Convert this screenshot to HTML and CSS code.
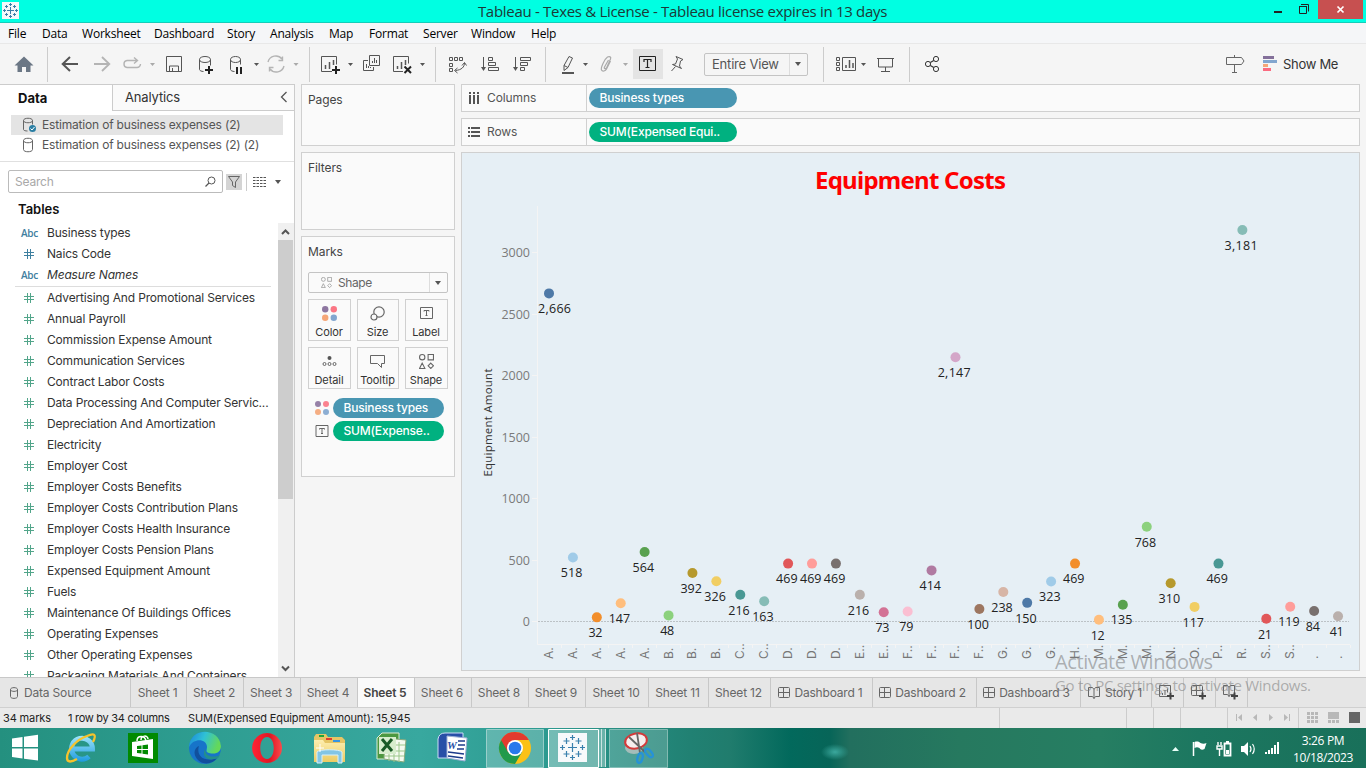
FILE: index.html
```html
<!DOCTYPE html>
<html lang="en">
<head>
<meta charset="utf-8">
<title>Tableau - Texes &amp; License</title>
<link rel="stylesheet" href="styles.css">
</head>
<body>
<svg class="defs" width="0" height="0">
  <symbol id="hash" viewBox="0 0 10 10"><path d="M3.5 0v10M6.5 0v10M0 3.5h10M0 6.5h10" fill="none" stroke="currentColor" stroke-width="1"/></symbol>
  <symbol id="dash" viewBox="0 0 12 12"><path d="M1.5.5h9a1 1 0 0 1 1 1v8a1 1 0 0 1-1 1h-9a1 1 0 0 1-1-1v-8a1 1 0 0 1 1-1zM5.5.5v10M.5 5.5h11" fill="none" stroke="#666"/></symbol>
  <symbol id="book" viewBox="0 0 12 12"><path d="M6 2.500L4.500.5h-4v9h4L6 11.500l1.500-2h4v-9h-4zM6 2.500v9" fill="none" stroke="#666"/></symbol>
  <symbol id="dots" viewBox="0 0 14 14"><circle cx="3" cy="3" r="3" fill="#8d76a0"/><circle cx="11" cy="3" r="3" fill="#fb7684"/><circle cx="3" cy="11" r="3" fill="#f5a677"/><circle cx="11" cy="11" r="3" fill="#82a6cf"/></symbol>
  <symbol id="tbox" viewBox="0 0 13 12"><path d="M.5.5h12v11H.5zM4 4.500V3.500h5v1M6.500 3.500v5M5.500 8.500h2" fill="none" stroke="#666"/></symbol>
  <symbol id="shapes" viewBox="0 0 14 14"><g fill="none" stroke="currentColor"><circle cx="3" cy="3" r="2.500"/><path d="M8.500.5h5v5h-5zM3 8.500L.5 13.500h5z"/><path d="M11 8.500l2.500 2.500-2.500 2.500L8.500 11z"/></g></symbol>
</svg>

<header class="titlebar">
  <svg class="app-icon" width="17" height="17"><rect width="17" height="17" fill="#f4f8fa"/><g stroke="#3b7ea8" stroke-width="1"><path d="M8.500 5v7M5 8.500h7M8.500 1v3M7 2.500h3M8.500 13v3M7 14.500h3M1 8.500h3M2.500 7v3M13 8.500h3M14.500 7v3M4.500 3v3M3 4.500h3M12.500 3v3M11 4.500h3M4.500 11v3M3 12.500h3M12.500 11v3M11 12.500h3"/></g></svg>
  <span class="title-text">Tableau - Texes &amp; License - Tableau license expires in 13 days</span>
  <div class="win-controls">
    <svg width="48" height="19"><path d="M4 12h8" stroke="#222" stroke-width="2"/><path d="M29.500 6.500h7v7h-7z" fill="none" stroke="#222"/><path d="M29 6.500h8M31 4.500h7.500v7" fill="none" stroke="#222"/></svg>
    <svg class="close" width="45" height="19"><path d="M19.500 6.500l6 6M25.500 6.500l-6 6" stroke="#fff" stroke-width="1.700"/></svg>
  </div>
</header>

<nav class="menu"><span>File</span><span>Data</span><span>Worksheet</span><span>Dashboard</span><span>Story</span><span>Analysis</span><span>Map</span><span>Format</span><span>Server</span><span>Window</span><span>Help</span></nav>

<div class="toolbar">
  <svg width="48" height="40" viewBox="0 44 48 40"><path d="M24 56.500l-9.500 9h3v6.500h4.500v-5h4v5h4.500v-6.500h3z" fill="#6b7785"/><path d="M47.500 47v35" stroke="#ccc"/></svg>
  <svg width="262" height="40" viewBox="48 44 262 40" fill="none" stroke="#555">
    <path d="M78 64H63M70 57l-7.300 7 7.300 7" stroke-width="2"/>
    <g stroke="#b4b4b4"><path d="M94 64h15M102 57l7.300 7-7.300 7" stroke-width="1.800"/><path d="M137 60.500h-10a3.500 3.500 0 0 0-3 3.500 3.500 3.500 0 0 0 3 3.500h10a3.500 3.500 0 0 0 3.500-3.500M134 57.500l3.500 3-3.500 3" stroke-width="1.400"/><path d="M268 62a8 8 0 0 1 14-3M284 66a8 8 0 0 1-14 3M282.500 56.500v4h-4M269.500 71.500v-4h4" stroke-width="1.400"/></g>
    <path d="M166.500 56.500h15v15h-15zM169.500 71v-5h9v5M172.500 71v-3"/>
    <path d="M199.500 59.500v10c0 1 2 2 4 2M210.500 59.500v6M199.500 59.500c0-4 11-4 11 0s-11 4-11 0z"/><path d="M205 70h8M209 66v8" stroke="#222" stroke-width="2"/>
    <path d="M230.500 59.500v10c0 1 2 2 4 2M240.500 59.500v5M230.500 59.500c0-4 10-4 10 0s-10 4-10 0z"/><path d="M237 67v7M241 67v7" stroke="#222" stroke-width="2"/>
    <g stroke="none"><path d="M150 63h5l-2.500 3zM293.500 63h5l-2.500 3z" fill="#aaa"/><path d="M254 63h5l-2.500 3z" fill="#555"/></g>
    <path d="M309.500 47v35" stroke="#ccc"/>
  </svg>
  <svg width="126" height="40" viewBox="310 44 126 40" fill="none" stroke="#555">
    <path d="M332 71.500h-10.500v-15h15v8"/><path d="M325.500 65v4M329.500 62v7M333.500 60v5" stroke-width="1.500"/><path d="M332 70h8M336 66v8" stroke="#222" stroke-width="2"/>
    <path d="M369.500 55.500h10v10h-10zM368 60.500h-4.500v10h10V67M372.500 63v-2M374.500 63v-5M376.500 63v-3M366.500 68v-4M368.500 68v-2M370.500 68v-1"/>
    <path d="M403 71.500h-9.500v-15h15v7"/><path d="M397.500 66v3M401.500 62v7M405.500 60v5" stroke-width="1.500"/><path d="M404.500 66.500l6.500 6.500M411 66.500l-6.500 6.500" stroke="#222" stroke-width="2"/>
    <path d="M348 63h5l-2.500 3zM420 63h5l-2.500 3z" fill="#555" stroke="none"/><path d="M435.500 47v35" stroke="#ccc"/>
  </svg>
  <svg width="110" height="40" viewBox="436 44 110 40" fill="none" stroke="#555">
    <path d="M449.500 57.500h3v3h-3zM454.500 57.500h3v3h-3zM459.500 57.500h3v3h-3zM449.500 63.500h3v3h-3zM449.500 68.500h3v3h-3z"/><path d="M464.500 63c0 4-3 7-9 7.500M462 65.500l2.500-3 2 3M457.500 68l-3 2.500 3 2.500"/>
    <path d="M483.500 57v12M488.500 57.500h4v3h-4zM488.500 62.500h7v3h-7zM488.500 67.500h10v3h-10z"/><path d="M515.500 57v12M520.500 57.500h10v3h-10zM520.500 62.500h7v3h-7zM520.500 67.500h4v3h-4z"/>
    <path d="M481 67h5l-2.500 4zM513 67h5l-2.500 4z" fill="#555" stroke="none"/><path d="M545.500 47v35" stroke="#ccc"/>
  </svg>
  <svg width="154" height="40" viewBox="546 44 154 40" fill="none" stroke="#555">
    <path d="M569 56.500l3.500 1.500-4.500 9.500-4 3v-5zM564 65.500l4 2"/><path d="M562 73h12" stroke-width="2"/>
    <path d="M610.500 61l-4 8c-1 2-4 3-5 1s3-11 6-13c2-1 4 0 3 2l-4 9c-1 1-3 1-2-1l4-7" stroke="#aaa" stroke-width="1.200"/>
    <path d="M633 49h30v30h-30z" fill="#e4e4e4" stroke="none"/><path d="M639.500 56.500h16v14h-16z" stroke="#222"/><path d="M644 62v-2.500h7V62M647.500 60v8M645.500 67.500h4" stroke="#222" stroke-width="1.200"/>
    <path d="M676 56.500l7 3-2.500 1.500-1 5 2 2.500-9-4 3-.5 2-5zM675.500 66.500l-4 4.500"/>
    <path d="M583 63h5l-2.500 3z" fill="#555" stroke="none"/><path d="M623 63h5l-2.500 3z" fill="#aaa" stroke="none"/>
  </svg>
  <div class="fit-select"><span>Entire View</span><i class="caret"></i></div>
  <svg width="134" height="40" viewBox="808 44 134 40" fill="none" stroke="#555">
    <path d="M823.500 47v35M909.500 47v35" stroke="#ccc"/>
    <path d="M836.500 57.500h3v3h-3zM836.500 62.500h3v3h-3zM836.500 67.500h3v3h-3zM842.500 57.500h13v13h-13z"/><path d="M846 68v-3M849.500 68v-8M853 68v-5" stroke-width="1.500"/><path d="M861 63h5l-2.500 3z" fill="#555" stroke="none"/>
    <path d="M877 58.500h17M878.500 59v8h14v-8M885.500 67v5M881 71.500h9"/>
    <circle cx="936" cy="59" r="2.600" stroke="#333"/><circle cx="928" cy="64" r="2.600" stroke="#333"/><circle cx="936" cy="69" r="2.600" stroke="#333"/><path d="M930.300 62.500l3.500-2M930.300 65.500l3.500 2" stroke="#333" stroke-width="1.300"/>
  </svg>
  <svg class="guide" width="58" height="40" viewBox="1222 44 58 40" fill="none" stroke="#666"><path d="M1226.500 57.500h15l2.500 3.500-2.500 3.500h-15zM1234.500 55v2M1234.500 65v7M1232 72.500h5"/><g stroke="none"><path d="M1263 56h11v3h-11z" fill="#84709a"/><path d="M1263 60h14v3h-14z" fill="#82a6cf"/><path d="M1263 64h5v3h-5z" fill="#f5a677"/><path d="M1263 68h8v3h-8z" fill="#fb6b80"/></g></svg>
  <span class="show-me">Show Me</span>
</div>

<main class="workspace">
  <aside class="data-pane">
    <div class="pane-tabs"><b>Data</b><span>Analytics</span><svg width="8" height="12"><path d="M6.500 1l-5 5 5 5" fill="none" stroke="#555" stroke-width="1.300"/></svg></div>
    <div class="sources">
      <div class="source selected"><svg width="15" height="16" fill="none" stroke="#666"><path d="M1.500 3.500v9c0 1 2 1.500 4 1.500M10.500 3.500v4M1.500 3.500c0-3 9-3 9 0s-9 3-9 0z"/><circle cx="10.500" cy="11.500" r="3.500" fill="#2a7ea3" stroke="none"/><path d="M8.500 11.500l1.500 1.500 2.500-3" stroke="#fff"/></svg>Estimation of business expenses (2)</div>
      <div class="source"><svg width="15" height="16" fill="none" stroke="#666"><path d="M1.500 3.500v9c0 3 9 3 9 0v-9M1.500 3.500c0-3 9-3 9 0s-9 3-9 0z"/></svg>Estimation of business expenses (2) (2)</div>
    </div>
    <div class="search-row">
      <div class="search"><span>Search</span><svg width="11" height="11"><circle cx="6.500" cy="4.500" r="3.500" fill="none" stroke="#555"/><path d="M4 7l-3.500 3.500" stroke="#555" stroke-width="1.300"/></svg></div>
      <svg width="16" height="16" class="funnel"><path d="M2.500 2.500h11L9.500 8v5.500l-3-2V8z" fill="none" stroke="#666"/></svg>
      <i class="vline"></i>
      <svg width="13" height="10"><path d="M0 .5h13M0 3.500h13M0 6.500h13M0 9.500h13" stroke="#555" stroke-dasharray="2.500 1"/></svg>
      <i class="caret"></i>
    </div>
    <h2>Tables</h2>
    <div class="fields-wrap">
      <div class="fields">
        <div class="dims">
          <div class="field"><em>Abc</em>Business types</div>
          <div class="field"><svg><use href="#hash"/></svg>Naics Code</div>
          <div class="field gen"><em>Abc</em>Measure Names</div>
        </div>
        <div class="field"><svg><use href="#hash"/></svg>Advertising And Promotional Services</div>
        <div class="field"><svg><use href="#hash"/></svg>Annual Payroll</div>
        <div class="field"><svg><use href="#hash"/></svg>Commission Expense Amount</div>
        <div class="field"><svg><use href="#hash"/></svg>Communication Services</div>
        <div class="field"><svg><use href="#hash"/></svg>Contract Labor Costs</div>
        <div class="field"><svg><use href="#hash"/></svg>Data Processing And Computer Servic...</div>
        <div class="field"><svg><use href="#hash"/></svg>Depreciation And Amortization</div>
        <div class="field"><svg><use href="#hash"/></svg>Electricity</div>
        <div class="field"><svg><use href="#hash"/></svg>Employer Cost</div>
        <div class="field"><svg><use href="#hash"/></svg>Employer Costs Benefits</div>
        <div class="field"><svg><use href="#hash"/></svg>Employer Costs Contribution Plans</div>
        <div class="field"><svg><use href="#hash"/></svg>Employer Costs Health Insurance</div>
        <div class="field"><svg><use href="#hash"/></svg>Employer Costs Pension Plans</div>
        <div class="field"><svg><use href="#hash"/></svg>Expensed Equipment Amount</div>
        <div class="field"><svg><use href="#hash"/></svg>Fuels</div>
        <div class="field"><svg><use href="#hash"/></svg>Maintenance Of Buildings Offices</div>
        <div class="field"><svg><use href="#hash"/></svg>Operating Expenses</div>
        <div class="field"><svg><use href="#hash"/></svg>Other Operating Expenses</div>
        <div class="field"><svg><use href="#hash"/></svg>Packaging Materials And Containers</div>
      </div>
      <div class="scrollbar"><svg width="16" height="17"><path d="M4 11l3.500-3.500L11 11" fill="none" stroke="#555" stroke-width="2"/></svg><i class="thumb"></i><svg class="down" width="16" height="17"><path d="M4 6.500L7.500 10 11 6.500" fill="none" stroke="#555" stroke-width="2"/></svg></div>
    </div>
  </aside>

  <section class="cards">
    <div class="card pages">Pages</div>
    <div class="card filters">Filters</div>
    <div class="card marks"><span>Marks</span>
      <div class="mark-type"><svg width="11" height="11" color="#999"><use href="#shapes"/></svg><span>Shape</span><i class="caret"></i></div>
      <div class="mark-grid">
        <div><svg width="15" height="15"><use href="#dots"/></svg>Color</div>
        <div><svg width="16" height="15" fill="none" stroke="#666" stroke-width="1.200"><circle cx="9" cy="6" r="5.200"/><circle cx="4" cy="11" r="3" fill="#fafafa"/></svg>Size</div>
        <div><svg width="13" height="15"><use href="#tbox" y="1" height="12" width="13"/></svg>Label</div>
        <div><svg width="15" height="15"><circle cx="7.500" cy="4" r="2" fill="#555"/><g fill="none" stroke="#666"><circle cx="2.500" cy="10" r="1.500"/><circle cx="7.500" cy="10" r="1.500"/><circle cx="12.500" cy="10" r="1.500"/></g></svg>Detail</div>
        <div><svg width="15" height="15"><path d="M.5 1.500h14v8h-3v4l-4-4h-7z" fill="none" stroke="#666"/></svg>Tooltip</div>
        <div><svg width="15" height="15" color="#666"><use href="#shapes"/></svg>Shape</div>
      </div>
      <div class="shelf-item"><svg width="14" height="14" opacity=".9"><use href="#dots"/></svg><span class="pill blue">Business types</span></div>
      <div class="shelf-item"><svg width="13" height="12"><use href="#tbox"/></svg><span class="pill green">SUM(Expense..</span></div>
    </div>
  </section>

  <section class="sheet">
    <div class="shelf"><div class="shelf-name"><svg width="12" height="12" stroke="#555" stroke-width="2"><path d="M2 0v2M6 0v2M10 0v2M2 3v9M6 3v9M10 3v9"/></svg>Columns</div><span class="pill blue">Business types</span></div>
    <div class="shelf"><div class="shelf-name"><svg width="12" height="12" stroke="#555" stroke-width="2"><path d="M0 2h2M0 6h2M0 10h2M3 2h9M3 6h9M3 10h9"/></svg>Rows</div><span class="pill green">SUM(Expensed Equi..</span></div>
    <div class="view"><svg id="chart" width="897" height="517" viewBox="462 153 897 517"></svg></div>
  </section>
</main>

<div class="tabs">
  <span class="source-tab"><svg width="9" height="12"><path d="M.5 2.500v7c0 2.500 7 2.500 7 0v-7M.5 2.500c0-2.500 7-2.500 7 0s-7 2.500-7 0z" fill="none" stroke="#666"/></svg>Data Source</span><span class="t56">Sheet 1</span><span>Sheet 2</span><span>Sheet 3</span><span>Sheet 4</span><span class="active">Sheet 5</span><span>Sheet 6</span><span>Sheet 8</span><span>Sheet 9</span><span class="t63">Sheet 10</span><span class="t60">Sheet 11</span><span class="t62">Sheet 12</span><span class="board"><svg width="12" height="12"><use href="#dash"/></svg>Dashboard 1</span><span class="board b2"><svg width="12" height="12"><use href="#dash"/></svg>Dashboard 2</span><span class="board b2"><svg width="12" height="12"><use href="#dash"/></svg>Dashboard 3</span><span class="story"><svg width="12" height="12"><use href="#book"/></svg>Story 1</span>
  <span class="new"><svg width="16" height="16"><path d="M9 11.500H.5V.5h11v7M3.500 8v2M6 5v5M8.500 3.500v4" fill="none" stroke="#666"/><path d="M8 11h7M11.500 7.500v7" stroke="#444" stroke-width="2"/></svg></span><span class="new"><svg width="16" height="16"><use href="#dash" width="12" height="12"/><path d="M8 11h7M11.500 7.500v7" stroke="#444" stroke-width="2"/></svg></span><span class="new"><svg width="16" height="16"><use href="#book" width="12" height="12"/><path d="M8 11h7M11.500 7.500v7" stroke="#444" stroke-width="2"/></svg></span>
</div>

<div class="status">
  <span>34 marks</span><span>1 row by 34 columns</span><span>SUM(Expensed Equipment Amount): 15,945</span>
  <svg width="367" height="20" viewBox="999 708 367 20"><path d="M999.500 708v20M1126.500 708v20M1153.500 708v20M1180.500 708v20M1227.500 708v20M1298.500 708v20" stroke="#ccc"/><g fill="#b8b8b8"><path d="M1236 714h1v7h-1zM1242 714v7l-4-3.500zM1257 714v7l-4-3.500zM1269 714v7l4-3.500zM1284 714v7l4-3.500zM1289 714h1v7h-1z"/><path d="M1307 712h3v3h-3zM1311 712h3v3h-3zM1315 712h3v3h-3zM1307 716h3v3h-3zM1311 716h3v3h-3zM1315 716h3v3h-3zM1307 720h3v3h-3zM1311 720h3v3h-3zM1315 720h3v3h-3zM1328 712h11v7h-11zM1328 720h3v3h-3zM1332 720h3v3h-3zM1336 720h3v3h-3z"/></g><path d="M1349 712h11v11h-11z" fill="#666"/></svg>
</div>

<footer class="taskbar">
  <svg width="486" height="40" viewBox="0 728 486 40">
    <defs>
      <linearGradient id="ie" gradientUnits="userSpaceOnUse" x1="0" y1="736" x2="0" y2="762"><stop stop-color="#9ee4fb"/><stop offset="1" stop-color="#1c9ade"/></linearGradient>
      <linearGradient id="edge" x1="0" y1="0" x2="1" y2=".3"><stop stop-color="#1b86d8"/><stop offset=".5" stop-color="#2fc1d6"/><stop offset="1" stop-color="#64d85a"/></linearGradient>
      <linearGradient id="opera"><stop stop-color="#ff2434"/><stop offset=".6" stop-color="#e01624"/><stop offset="1" stop-color="#fb4b4b"/></linearGradient>
      <linearGradient id="folder" x2="0" y2="1"><stop stop-color="#fdeeb0"/><stop offset="1" stop-color="#eccb62"/></linearGradient>
    </defs>
    <path d="M12 738.500l10.500-1.500v10H12zM24 736.800l14-2V747H24zM12 748.500h10.500v10L12 757zM24 748.500h14v12L24 758.700z" fill="#fff"/>
    <path d="M74 749h18.500a10.500 10.500 0 1 0-3.500 7.500" fill="none" stroke="url(#ie)" stroke-width="5"/>
    <path d="M93 742c4-8 1-9-6-6-9 3-20 13-20 22 0 5 5 4 10 1" fill="none" stroke="#f6c32c" stroke-width="2.300"/>
    <path d="M128 733h30v30h-30z" fill="#018a01"/><path d="M132 742l21-3v20l-21-3z" fill="#fff"/><path d="M137 741c0-6 8-6 9 0M141 740c0-5 7-5 7-1" fill="none" stroke="#fff" stroke-width="1.500"/><path d="M137 746l4.500-.6v3.600H137zM142.500 745.300l5.500-.8v4.500h-5.500zM137 750h4.500v3.600l-4.500-.5zM142.500 750h5.500v4.400l-5.500-.7z" fill="#018a01"/>
    <circle cx="205" cy="748" r="16" fill="#1774c9"/><path d="M189 747c1-20 30-20 32-1 0 6-5 9-12 7-4-1-2-3-2-6 0-8-13-10-18 0z" fill="url(#edge)"/><path d="M199 746c-3 9 4 17 18 12-4 6-14 8-20 1-4-5-3-11 2-13z" fill="#11509d"/><path d="M205 749c0 8 8 9 15 6l-2 3c-10 4-17-1-13-9z" fill="#238f8c"/>
    <path fill-rule="evenodd" d="M267 733a15 15 0 1 0 .1 0zM267 737c9 0 9 22 0 22s-9-22 0-22z" fill="url(#opera)"/>
    <path d="M314 737l2-3h10l2 3h14l3 3v22h-31z" fill="#e6c565"/><path d="M319 735h5v2h-5z" fill="#21a637"/><path d="M326 738h6v2h-6z" fill="#e33b2d"/><path d="M333 740h7v2h-7z" fill="#3795e2"/><path d="M314 740h9l2 3h20v19h-31z" fill="url(#folder)"/><path d="M317 752c2-3 23-3 25 0v11h-4v-8h-16v8h-5z" fill="#83c5e5" stroke="#d6f0fb"/><path d="M316 748h8M320 744v8" stroke="#fff"/>
    <path d="M377 738l5-5h17v26h-22z" fill="#4c9840" stroke="#dcecd4"/><path d="M385 738l21 2-2 22-20-3z" fill="#f5faf0" stroke="#87a97c"/><path d="M389 741v20M394 742v20M399 742v20M385 745h20M385 751h20M384 756h20" stroke="#9bc78a"/><path d="M379 737h17v17h-17z" fill="#d7edcd"/><path d="M382 739l10 12M392 739l-10 12" stroke="#195a25" stroke-width="3"/>
    <path d="M438 739q1-6 7-6h18v25h-25z" fill="#284fa7" stroke="#cbdcf7"/><path d="M447 736l20 2-2 23-18-3z" fill="#fff" stroke="#9dafd6"/><path d="M458 741h7M458 745h7M448 752l16 2M448 756l15 2M457 749h7" stroke="#1c3b8b" stroke-width="1.500"/><text x="447" y="749" class="word">W</text>
  </svg>
  <svg width="184" height="40" viewBox="486 728 184 40">
    <path d="M486.500 729.500h57v38h-57z" fill="#ffffff3a" stroke="#ffffff70"/>
    <path d="M548.500 729.500h50v38h-50z" fill="#ffffff58" stroke="#fff"/><path d="M601.500 729v38M605.500 729v38" stroke="#ffffffc0"/><path d="M599 729h2v38h-2zM602 729h3v38h-3z" fill="#ffffff50"/>
    <path d="M609.500 729.500h58v38h-58z" fill="#ffffff30" stroke="#ffffff60"/>
    <circle cx="515" cy="748" r="16" fill="#fbc116"/><path d="M501.100 740a16 16 0 0 0 13.900 24l7-12-7-4-6.900-4z" fill="#219a4c"/><path d="M501.100 740a16 16 0 0 1 27.800 0H515l-7 12z" fill="#e33b2e"/><circle cx="515" cy="748" r="8" fill="#fff"/><circle cx="515" cy="748" r="6.300" fill="#2879eb"/>
    <path d="M558 733h29v29h-29z" fill="#f7f9fb"/><g stroke="#3a80ad" stroke-width="1.200"><path d="M572.500 743v9M568 747.500h9M572.500 735v5M570 737.500h5M572.500 755v5M570 757.500h5M562.500 745v5M560 747.500h5M582.500 745v5M580 747.500h5M566.500 738v6M563.500 741h6M578.500 738v6M575.500 741h6M566.500 751v6M563.500 754h6M578.500 751v6M575.500 754h6"/></g>
    <ellipse cx="634" cy="748" rx="9" ry="6" fill="#c9c9c9" opacity=".7"/><ellipse cx="636" cy="741" rx="11" ry="7.500" fill="#f5eeee" stroke="#d33a3a" stroke-width="2" transform="rotate(-12 636 741)"/><path d="M629 737l16 15M637 733l3 20" stroke="#666" stroke-width="1.800"/><ellipse cx="640" cy="758" rx="2.500" ry="5" fill="none" stroke="#2692d8" stroke-width="2.300" transform="rotate(15 640 758)"/><ellipse cx="649" cy="753" rx="2.500" ry="5" fill="none" stroke="#2692d8" stroke-width="2.300" transform="rotate(-40 649 753)"/>
  </svg>
  <svg class="tray" width="120" height="40" viewBox="1165 728 120 40">
    <path d="M1172 751h7l-3.500-4z" fill="#e8fff8"/>
    <path d="M1193.500 742v14" stroke="#fff" stroke-width="1.500"/><path d="M1194.500 742c3-1 5 0 6 1 2 1 4 1 6 0l-2 6c-2 1-4 1-5-1-2-1-3-1-5 0z" fill="#fff"/>
    <path d="M1224.500 743.500h6v12h-6zM1226 742h3" fill="none" stroke="#fff" stroke-width="1.800"/><path d="M1226 750h3v4h-3z" fill="#fff"/><path d="M1218 742v3M1221 742v3M1217 746h5v3h-5zM1219.500 749v7" stroke="#fff" stroke-width="1.400" fill="none"/>
    <path d="M1241 746h3l4-4v14l-4-4h-3z" fill="#fff"/><path d="M1250 746q2 3 0 6M1252.500 744q3.500 5 0 10" fill="none" stroke="#fff" stroke-width="1.200"/>
    <path d="M1265 752h2v2h-2zM1268 750h2v4h-2zM1271 748h2v6h-2zM1274 745h2v9h-2zM1277 742h2v12h-2z" fill="#fff"/>
  </svg>
  <div class="clock"><span>3:26 PM</span><span>10/18/2023</span></div>
</footer>

<div class="watermark"><div>Activate Windows</div><p>Go to PC settings to activate Windows.</p></div>
<script src="chart.js"></script>
</body>
</html>
```
FILE: styles.css
```css
* { box-sizing: border-box; }
body { margin: 0; width: 1366px; height: 768px; overflow: hidden; background: #f5f5f5; font: 12px/16px Inter, "Open Sans", sans-serif; color: #333; display: flex; flex-direction: column; position: relative; }
svg { flex: none; display: block; }
.defs { position: absolute; }
.caret { width: 0; height: 0; border: 3.5px solid transparent; border-top: 4.5px solid #555; border-bottom: 0; flex: none; }

.titlebar { height: 23px; flex: none; background: #00ffe2; border-bottom: 1px solid #15cdb9; display: flex; }
.app-icon { margin: 2px 0 0 2px; }
.title-text { font: 15px/22px "Open Sans", sans-serif; color: #1c3a37; width: 1251px; text-align: center; padding-left: 76px; letter-spacing: -.3px; white-space: nowrap; }
.win-controls { display: flex; margin-left: auto; margin-right: 3px; }
.close { background: #c75050; }

.menu { height: 21px; flex: none; background: #f5f6f8; border-bottom: 1px solid #e8e8e8; display: flex; padding-left: 8px; font: 12px/21px "Open Sans", sans-serif; color: #000; letter-spacing: -.2px; }
.menu span { width: 60px; }
.menu span:nth-child(1) { width: 34px; }
.menu span:nth-child(2) { width: 40px; }
.menu span:nth-child(3) { width: 72px; }
.menu span:nth-child(4) { width: 73px; }
.menu span:nth-child(5) { width: 43px; }
.menu span:nth-child(6) { width: 59px; }
.menu span:nth-child(7) { width: 40px; }
.menu span:nth-child(8) { width: 54px; }
.menu span:nth-child(9) { width: 48px; }

.toolbar { height: 40px; flex: none; display: flex; align-items: center; }
.fit-select { width: 104px; height: 23px; margin: 0 0 0 4px; border: 1px solid #c4c4c4; border-radius: 2px; display: flex; align-items: center; font-size: 13px; letter-spacing: -.2px; color: #555; background: linear-gradient(90deg, transparent 84px, #ddd 84px, #ddd 85px, transparent 85px); }
.fit-select span { width: 90px; padding-left: 7px; white-space: nowrap; }
.guide { margin-left: 280px; }
.show-me { font-size: 13px; margin-left: 3px; color: #333; letter-spacing: -.3px; }

.workspace { height: 593px; flex: none; display: flex; }
.data-pane { width: 295px; background: #fff; border-right: 1px solid #ccc; border-top: 1px solid #ccc; display: flex; flex-direction: column; }
.pane-tabs { display: flex; height: 26px; }
.pane-tabs b { width: 112px; padding-left: 18px; font-size: 13px; line-height: 26px; color: #111; }
.pane-tabs span { flex: 1; padding-left: 12px; font-size: 13px; line-height: 25px; background: #fafafa; border-left: 1px solid #ccc; border-bottom: 1px solid #ccc; letter-spacing: -.15px; }
.pane-tabs svg { width: 14px; height: 26px; padding: 6px 0; background: #fafafa; border-bottom: 1px solid #ccc; }
.sources { padding: 4px 11px 0; height: 51px; border-bottom: 1px solid #e0e0e0; letter-spacing: -.18px; }
.source { height: 20px; line-height: 20px; display: flex; align-items: center; padding-left: 11px; color: #555; white-space: nowrap; }
.source svg { margin-right: 5px; }
.selected { background: #e4e4e4; }
.search-row { display: flex; align-items: center; padding: 8px 0 0 8px; }
.search { width: 215px; height: 23px; border: 1px solid #bbb; border-radius: 2px; display: flex; align-items: center; justify-content: space-between; padding: 0 6px; color: #a8a8a8; letter-spacing: -.2px; }
.funnel { background: #d4d4d4; margin-left: 3px; }
.vline { width: 1px; height: 18px; background: #ccc; margin: 0 6px 0 4px; }
.search-row .caret { margin-left: 9px; }
h2 { font-size: 13px; line-height: 18px; margin: 7px 0 5px 18px; color: #111; font-weight: 600; }
.fields-wrap { display: flex; flex: 1; min-height: 0; }
.fields { width: 278px; overflow: hidden; color: #52a58a; letter-spacing: -.17px; }
.dims { margin-left: 15px; width: 256px; height: 65px; border-bottom: 1px solid #ddd; margin-top: -1px; color: #3f80a0; }
.field { display: flex; align-items: center; height: 21px; padding-left: 47px; white-space: nowrap; -webkit-text-fill-color: #333; }
.dims .field { padding-left: 32px; }
.field svg { width: 10px; height: 10px; margin: 0 13px 0 -23px; }
.field em { font: 600 10px/12px "Open Sans"; width: 18px; margin: 1px 8px 0 -26px; letter-spacing: -.3px; -webkit-text-fill-color: #3f80a0; }
.gen { font-style: italic; }
.scrollbar { width: 16px; background: #f0f0f0; display: flex; flex-direction: column; }
.thumb { width: 15px; height: 259px; background: #cdcdcd; }
.down { margin-top: auto; }

.cards { margin-left: 6px; width: 154px; display: flex; flex-direction: column; gap: 6px; }
.card { background: #fafafa; border: 1px solid #d0d0d0; padding: 7px 6px; color: #444; letter-spacing: -.1px; }
.pages { height: 62px; }
.filters { height: 78px; }
.marks { height: 241px; }
.mark-type { margin-top: 12px; height: 21px; border: 1px solid #c4c4c4; border-radius: 2px; display: flex; align-items: center; padding-left: 12px; color: #666; letter-spacing: -.4px; background: linear-gradient(90deg, transparent 120px, #ddd 120px, #ddd 121px, transparent 121px); }
.mark-type span { width: 97px; margin-left: 6px; }
.mark-grid { display: grid; grid-template-columns: 43px 42px 43px; gap: 6px; margin-top: 6px; font-size: 11px; text-align: center; color: #333; }
.mark-grid div { height: 42px; border: 1px solid #d0d0d0; display: flex; flex-direction: column; align-items: center; padding: 6px 1px 0 0; line-height: 14px; gap: 4px; }
.shelf-item { display: flex; align-items: center; height: 20px; margin-top: 3px; }
.mark-grid + .shelf-item { margin-top: 9px; }
.shelf-item svg { width: 14px; margin: 0 4px 0 7px; }
.shelf-item .pill { width: 111px; }
.pill { height: 20px; border-radius: 10px; color: #fff; padding-left: 10.5px; line-height: 19px; font-weight: 500; white-space: nowrap; letter-spacing: -.18px; }
.blue { background: #4996b2; }
.green { background: #00b180; }

.sheet { margin-left: 6px; width: 899px; display: flex; flex-direction: column; gap: 6px; }
.shelf { height: 28px; background: #fafafa; border: 1px solid #d0d0d0; display: flex; align-items: center; color: #555; }
.shelf-name { width: 125px; height: 26px; border-right: 1px solid #d0d0d0; display: flex; align-items: center; padding-left: 6px; gap: 7px; letter-spacing: -.1px; }
.shelf .pill { width: 148px; margin-left: 2px; }
.view { height: 519px; background: #e6eff5; border: 1px solid #d0d0d0; }
.chart-title { font: 700 24px "Noto Sans"; fill: #f00; }
.mark-label { font: 12.5px "Open Sans"; fill: #222; }
.tick { font: 12.5px "Open Sans"; fill: #7a7a7a; }
.cat { font: 12px Inter; fill: #777; }
.axis-title { font: 11.5px "Open Sans"; fill: #333; }

.tabs { height: 31px; flex: none; background: #e6e6e6; border-top: 1px solid #c8c8c8; border-bottom: 1px solid #d0d0d0; display: flex; color: #666; line-height: 29px; letter-spacing: -.18px; }
.tabs > span { width: 57px; border-right: 1px solid #c8c8c8; white-space: nowrap; display: flex; align-items: center; justify-content: center; flex: none; padding-right: 2px; }
.tabs .source-tab { width: 131px; justify-content: flex-start; padding-left: 10px; gap: 5px; }
.tabs .t56 { width: 56px; }
.tabs .t63 { width: 63px; }
.tabs .t60 { width: 60px; }
.tabs .t62 { width: 62px; }
.tabs .board { width: 102px; gap: 4px; }
.tabs .b2 { width: 104px; padding-right: 4px; }
.tabs .story { width: 71px; gap: 5px; }
.tabs .new { width: 32px; }
.tabs .active { background: #fafafa; font-weight: 600; color: #444; }
.status { height: 20px; flex: none; background: #eaeaea; display: flex; font-size: 11px; line-height: 20px; padding-left: 3px; gap: 18px; color: #222; white-space: nowrap; letter-spacing: -.13px; }
.status span:nth-child(1) { width: 47px; }
.status span:nth-child(2) { width: 102px; letter-spacing: -.28px; }
.status svg { margin-left: auto; }

.taskbar { height: 40px; flex: none; display: flex; background: radial-gradient(ellipse 14px 8px at 835px 24px, #3ba89d 0, transparent 100%), linear-gradient(90deg, #24907f 0, #2e9d91 200px, #38a89f 420px, #2d9b91 540px, #218173 690px, #207c6d 730px, #02695c 790px, #076558 830px, #226f5e 850px, #26795f 960px, #267e62 1100px, #1c7760 1200px, #19705a 1366px); }
.word { font: italic 700 11px "Liberation Serif"; fill: #284fa7; }
.tray { margin-left: 495px; }
.clock { width: 76px; display: flex; flex-direction: column; align-items: center; font: 12px/17px "Open Sans", sans-serif; letter-spacing: -.35px; color: #fff; padding-top: 4px; }

.watermark { position: absolute; left: 1055px; top: 650px; font: 20px/24px "Open Sans", sans-serif; color: rgba(120,120,120,.55); white-space: nowrap; letter-spacing: -.4px; }
.watermark p { font-size: 15px; line-height: 22px; margin: 0; letter-spacing: -.3px; }
```
FILE: chart.js
```js
const NS = 'http://www.w3.org/2000/svg';
const chart = document.getElementById('chart');
const values = [2666, 518, 32, 147, 564, 48, 392, 326, 216, 163, 469, 469, 469, 216, 73, 79, 414, 2147, 100, 238, 150, 323, 469, 12, 135, 768, 310, 117, 469, 3181, 21, 119, 84, 41];
const cats = 'A. A. A. A. A. B. B. B. C.. C.. D. D. D. E.. E.. F.. F.. F.. F.. G. G. G. H. M. M. M. N. O. P.. R. S.. S.. . .'.split(' ');
const palette = ['#4e79a7', '#a0cbe8', '#f28e2b', '#ffbe7d', '#59a14f', '#8cd17d', '#b6992d', '#f1ce63', '#499894', '#86bcb6', '#e15759', '#ff9d9a', '#79706e', '#bab0ac', '#d37295', '#fabfd2', '#b07aa1', '#d4a6c8', '#9d7660', '#d7b5a6'];

function add(tag, attrs, text) {
  const el = document.createElementNS(NS, tag);
  for (const k in attrs) el.setAttribute(k, attrs[k]);
  if (text !== undefined) el.textContent = text;
  chart.appendChild(el);
  return el;
}
const y = v => 621.3 - v * 0.123;

add('text', { x: 815, y: 189, class: 'chart-title', textLength: 191 }, 'Equipment Costs');
add('text', { transform: 'translate(491.500 476.500) rotate(-90)', class: 'axis-title', textLength: 108 }, 'Equipment Amount');
add('path', { d: 'M537.5 206V644.500H1350', fill: 'none', stroke: '#f4f4f4' });
add('path', { d: 'M538 621.5H1349', stroke: '#bcc2c6', 'stroke-dasharray': '2 1' });
for (let v = 0; v <= 3000; v += 500) {
  const ty = Math.round(y(v)) + 0.5;
  add('path', { d: `M532 ${ty}h5`, stroke: '#f4f4f4' });
  add('text', { x: 530, y: ty + 4, 'text-anchor': 'end', class: 'tick', textLength: v >= 1000 ? 28.5 : v ? 21.5 : 7 }, v);
}
values.forEach((v, i) => {
  const x = 549 + i * 23.91;
  add('path', { d: `M${Math.round(x + 11.5) + 0.5} 645v3`, stroke: '#f4f4f4' });
  add('circle', { cx: x, cy: y(v), r: 5, fill: palette[i % 20] });
  const label = v.toLocaleString('en-US');
  add('text', { x: i ? x - 1.3 : 554.5, y: y(v) + 19.8, 'text-anchor': 'middle', class: 'mark-label', textLength: [0, 0, 14, 21.5, 0, 33][label.length] }, label);
  add('text', { transform: `translate(${x + 4} 659) rotate(-90)`, class: 'cat' }, cats[i]);
});
```
